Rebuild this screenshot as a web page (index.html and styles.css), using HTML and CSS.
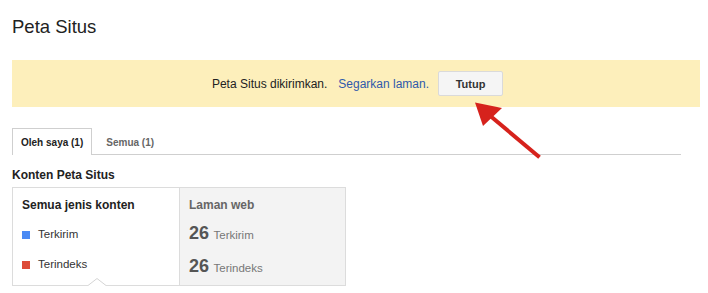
FILE: index.html
```html
<!DOCTYPE html>
<html lang="id">
<head>
<meta charset="utf-8">
<title>Peta Situs</title>
<link rel="stylesheet" href="styles.css">
</head>
<body>
<div class="page">
  <h1 class="title">Peta Situs</h1>
  <div class="banner">
    <span class="msg">Peta Situs dikirimkan.</span>
    <a class="link" href="#">Segarkan laman.</a>
    <button class="btn" type="button">Tutup</button>
  </div>
  <div class="tabs">
    <div class="tab active">Oleh saya (1)</div>
    <div class="tab">Semua (1)</div>
  </div>
  <h2 class="heading">Konten Peta Situs</h2>
  <div class="box">
    <div class="col col-left">
      <div class="col-title">Semua jenis konten</div>
      <div class="legend"><span class="sq sq-blue"></span>Terkirim</div>
      <div class="legend"><span class="sq sq-red"></span>Terindeks</div>
      <svg class="notch" width="18" height="8" viewBox="0 0 18 8">
        <rect x="0" y="6" width="18" height="2" fill="#fff"/>
        <polygon points="0.5,8 9,0.8 17.5,8" fill="#fff"/>
        <polyline points="0,7.5 9,0.5 18,7.5" fill="none" stroke="#d4d4d4" stroke-width="1"/>
      </svg>
    </div>
    <div class="col col-right">
      <div class="col-title muted">Laman web</div>
      <div class="stat"><span class="num">26</span> <span class="lbl">Terkirim</span></div>
      <div class="stat"><span class="num">26</span> <span class="lbl">Terindeks</span></div>
    </div>
  </div>
</div>
<svg class="arrow" width="80" height="66" viewBox="470 98 80 66">
  <line x1="538" y1="156" x2="488" y2="114" stroke="#d6221c" stroke-width="4" stroke-linecap="square"/>
  <polygon points="475,102.5 502,108 483,126" fill="#d6221c"/>
</svg>
</body>
</html>
```
FILE: styles.css
```css
html, body {
  margin: 0;
  padding: 0;
  background: #fff;
}
body {
  font-family: "Liberation Sans", Arial, sans-serif;
  color: #222;
  position: relative;
  width: 708px;
  height: 293px;
  overflow: hidden;
}
.page {
  padding: 0 8px 0 12px;
}
.title {
  margin: 0;
  padding-top: 16px;
  font-size: 18.5px;
  line-height: 22px;
  font-weight: normal;
  color: #222;
}
.banner {
  margin-top: 22px;
  width: 688px;
  height: 47px;
  background: #fdefbb;
  display: flex;
  align-items: center;
  justify-content: center;
  font-size: 12px;
  padding-left: 3px;
  box-sizing: border-box;
}
.msg {
  color: #222;
}
.link {
  color: #2f59ab;
  text-decoration: none;
  margin-left: 11px;
}
.btn {
  margin-left: 9px;
  width: 65px;
  height: 25px;
  font-family: "Liberation Sans", Arial, sans-serif;
  font-size: 11px;
  font-weight: bold;
  color: #333;
  background: #f5f5f5;
  border: 1px solid #dadada;
  border-radius: 2px;
  padding: 0;
}
.tabs {
  margin-top: 21px;
  width: 669px;
  display: flex;
  border-bottom: 1px solid #cfcfcf;
}
.tab {
  font-size: 10px;
  font-weight: bold;
  color: #666;
  padding: 2px 8px 0;
  line-height: 24px;
  border: 1px solid transparent;
  border-bottom: none;
  margin-bottom: -1px;
}
.tab.active {
  color: #222;
  background: #fff;
  border-color: #cfcfcf;
}
.tab + .tab {
  margin-left: 5px;
}
.heading {
  margin: 13px 0 0;
  font-size: 12px;
  line-height: 14px;
  font-weight: bold;
  color: #222;
}
.box {
  position: relative;
  margin-top: 5px;
  width: 334px;
  height: 99px;
  box-sizing: border-box;
  border: 1px solid #dcdcdc;
  display: flex;
}
.col {
  padding-top: 10px;
  box-sizing: border-box;
}
.col-left {
  width: 167px;
  padding-left: 9px;
  border-right: 1px solid #dcdcdc;
}
.col-right {
  flex: 1;
  padding-left: 9px;
  background: #f3f3f3;
}
.col-title {
  font-size: 12px;
  line-height: 14px;
  font-weight: bold;
  color: #222;
}
.col-title.muted {
  color: #666;
}
.legend {
  display: flex;
  align-items: center;
  height: 30px;
  font-size: 11.5px;
  color: #333;
}
.col-title + .legend {
  margin-top: 7px;
}
.sq {
  width: 8px;
  height: 8px;
  margin-right: 8px;
  margin-top: 1px;
}
.sq-blue {
  background: #4a8af4;
}
.sq-red {
  background: #dd4b39;
}
.notch {
  position: absolute;
  left: 75px;
  bottom: -1px;
  display: block;
}
.stat {
  line-height: 33px;
  height: 33px;
}
.col-title + .stat {
  margin-top: 5px;
}
.num {
  font-size: 18px;
  font-weight: bold;
  color: #555;
}
.lbl {
  font-size: 11.5px;
  color: #777;
}
.arrow {
  position: absolute;
  left: 470px;
  top: 98px;
  pointer-events: none;
}
```
